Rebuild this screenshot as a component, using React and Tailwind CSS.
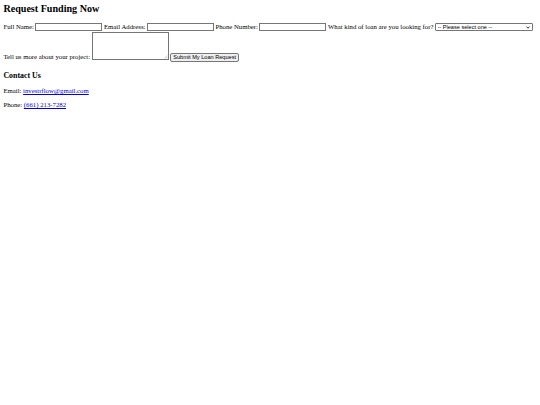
import React from 'react';

const serif = { fontFamily: '"Liberation Serif", "Times New Roman", serif' };
const sans = { fontFamily: '"Liberation Sans", Arial, sans-serif' };

export default function App() {
  return (
    <div className="min-h-[405px] w-[540px] bg-white px-[3.4px] pt-[3px] text-black" style={serif}>
      <h2 className="text-[10.1px] font-bold leading-[12px]">Request Funding Now</h2>

      <form className="mt-[7px] text-[6.75px] leading-[10px]" onSubmit={e => e.preventDefault()}>
        <div className="flex h-[10px] items-center gap-[1.5px] whitespace-nowrap">
          <label>Full Name:</label>
          <input className="h-[8px] w-[67px] border border-[#767676] px-[1px] text-[5.6px]" />
          <label>Email Address:</label>
          <input className="h-[8px] w-[67px] border border-[#767676] px-[1px] text-[5.6px]" />
          <label>Phone Number:</label>
          <input className="h-[8px] w-[67px] border border-[#767676] px-[1px] text-[5.6px]" />
          <label>What kind of loan are you looking for?</label>
          <div className="relative h-[8px] w-[98px]">
            <select
              className="block h-[8px] w-full appearance-none rounded-[1px] border border-[#767676] bg-white pl-[1.5px] text-[5.6px] leading-[6px]"
              style={sans}
              defaultValue=""
            >
              <option value="">-- Please select one --</option>
              <option>Fix and Flip</option>
              <option>Rental</option>
              <option>Construction</option>
            </select>
            <svg className="pointer-events-none absolute right-[3px] top-[2.5px]" width="4" height="3" viewBox="0 0 8 6">
              <path d="M1 1.2 L4 4.5 L7 1.2" fill="none" stroke="#222" strokeWidth="1.8" />
            </svg>
          </div>
        </div>

        <div className="flex items-end gap-[1.5px] whitespace-nowrap">
          <label className="leading-[7px]">Tell us more about your project:</label>
          <div className="relative h-[28px] w-[77px]">
            <textarea className="block h-full w-full resize-none border border-[#767676] text-[5.6px]" />
            <svg className="pointer-events-none absolute bottom-[1px] right-[1px]" width="4" height="4" viewBox="0 0 8 8">
              <path d="M7 1 L1 7 M7 4.5 L4.5 7" stroke="#999" strokeWidth="1" />
            </svg>
          </div>
          <button
            type="submit"
            className="mb-[-2px] h-[9px] w-[69px] rounded-[2px] border border-[#767676] bg-[#efefef] px-[2px] text-[5.6px] leading-[7px]"
            style={sans}
          >
            Submit My Loan Request
          </button>
        </div>
      </form>

      <h3 className="mt-[11px] text-[7.9px] font-bold leading-[9px]">Contact Us</h3>
      <p className="mt-[7px] text-[6.75px] leading-[8px]">
        Email: <a href="#" className="text-[#0000ee] underline">investrflow@gmail.com</a>
      </p>
      <p className="mt-[6px] text-[6.75px] leading-[8px]">
        Phone: <a href="#" className="text-[#0000ee] underline">(661) 213-7282</a>
      </p>
    </div>
  );
}
